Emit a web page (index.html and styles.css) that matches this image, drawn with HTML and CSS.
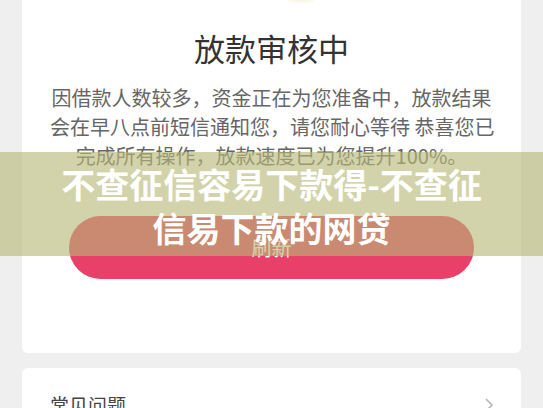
FILE: index.html
```html
<!DOCTYPE html>
<html lang="zh-CN">
<head>
    <meta charset="UTF-8">
    <meta name="viewport" content="width=device-width, initial-scale=1.0">
    <title>放款审核中</title>
    <link rel="stylesheet" href="styles.css">
</head>
<body>
    <div class="page">
        <!-- Status Card -->
        <div class="card status-card">
            <div class="status-icon"></div>
            <h1 class="status-title">放款审核中</h1>
            <p class="status-text">
                <span>因借款人数较多，资金正在为您准备中，放款结果</span>
                <span>会在早八点前短信通知您，请您耐心等待 恭喜您已</span>
                <span>完成所有操作，放款速度已为您提升100%。</span>
            </p>
            <div class="refresh-btn">刷新</div>
        </div>

        <!-- FAQ -->
        <div class="card faq-card">
            <div class="faq-label">常见问题</div>
            <svg class="faq-arrow" width="10" height="16" viewBox="0 0 10 16">
                <path d="M2 2 L8 8 L2 14" fill="none" stroke="#b5b5b5" stroke-width="1.6"/>
            </svg>
        </div>
    </div>

    <!-- Article title banner -->
    <div class="banner">
        <div class="banner-title">不查征信容易下款得-不查征<br>信易下款的网贷</div>
    </div>
</body>
</html>
```

FILE: styles.css
```css
body {
    font-family: "Noto Sans CJK SC", "Noto Sans", sans-serif;
    margin: 0;
    padding: 0;
    background-color: #efefef;
    color: #333;
}

.page {
    padding: 0 22px;
}

/* Cards */
.card {
    background-color: #fff;
    border-radius: 6px;
}

.status-card {
    border-radius: 0 0 6px 6px;
    padding: 0 28px 74px;
    text-align: center;
}
.status-icon {
    width: 28px;
    height: 3px;
    margin-left: 237px;
    background: radial-gradient(ellipse at 50% 0, #f8f4de 0, #fcfaf0 60%, #fff 100%);
}
.status-title {
    margin: 24px 0 0;
    font-size: 31px;
    line-height: 42px;
    font-weight: normal;
    color: #333;
}
.status-text {
    margin: 14px 0 0;
    font-size: 20px;
    line-height: 29px;
    color: #666;
}
.status-text span {
    display: block;
    white-space: nowrap;
}
.refresh-btn {
    width: 405px;
    height: 63px;
    margin: 46px auto 0;
    border-radius: 32px;
    background-color: #e84068;
    color: #fff;
    font-size: 20px;
    line-height: 63px;
}

.faq-card {
    margin-top: 15px;
    padding: 22px 27px 22px 28px;
    display: flex;
    justify-content: space-between;
    align-items: center;
}
.faq-label {
    font-size: 19px;
    line-height: 30px;
    color: #444;
}

/* Banner over the page */
.banner {
    position: absolute;
    top: 152px;
    left: 0;
    right: 0;
    height: 104px;
    padding: 10px 0 0;
    box-sizing: border-box;
    background-color: rgba(184, 184, 120, 0.62);
    text-align: center;
}
.banner-title {
    color: #fff;
    font-size: 34px;
    line-height: 44px;
    font-weight: bold;
}
```
